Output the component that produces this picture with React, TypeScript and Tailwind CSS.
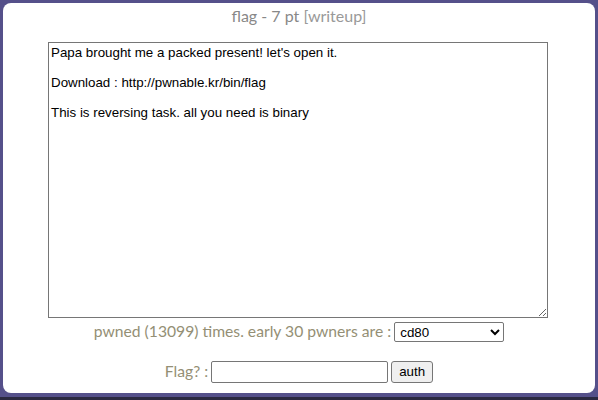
import React from "react";

export default function App() {
  const text =
    "Papa brought me a packed present! let's open it.\n\nDownload : http://pwnable.kr/bin/flag\n\nThis is reversing task. all you need is binary";
  return (
    <div className="w-[598px] h-[400px] bg-[#55508a] overflow-hidden flex flex-col">
      <div className="mx-[3px] mt-[3px] h-[390px] bg-white rounded-[8px] flex flex-col items-center font-['Lato',sans-serif]">
        <div className="mt-[3px] h-[19px] leading-[19px] text-[16px] text-[#888888]">
          flag - 7 pt <span className="text-[#999999]">[writeup]</span>
        </div>
        <textarea
          readOnly
          defaultValue={text}
          className="self-start ml-[45px] mt-[17px] w-[500px] h-[276px] border border-[#767676] p-[2px] text-[13.333px] leading-[15px] text-black font-['Liberation_Sans',Arial,sans-serif] resize-y outline-none"
        />
        <div className="mt-[2px] h-[24px] flex items-center text-[15.7px] text-[#948f75]">
          <span>pwned (13099) times. early 30 pwners are :</span>
          <select className="ml-[3px] w-[110px] h-[20px] border border-[#767676] rounded-[2px] bg-white text-black text-[13.333px] font-['Liberation_Sans',Arial,sans-serif] pl-[1px]">
            <option>cd80</option>
          </select>
        </div>
        <div className="mt-[17px] h-[22px] flex items-center text-[15.7px] text-[#948f75]">
          <span>Flag? :</span>
          <input
            type="text"
            className="ml-[3px] w-[177px] h-[22px] border border-[#767676] rounded-[2px] bg-white text-[13px] px-[2px] outline-none"
          />
          <button className="ml-[3px] w-[42px] h-[22px] bg-[#efefef] border border-[#767676] rounded-[3px] text-black text-[13.333px] font-['Liberation_Sans',Arial,sans-serif]">
            auth
          </button>
        </div>
      </div>
      <div className="h-[4px]" />
      <div className="h-[3px] bg-[#2b2940]" />
    </div>
  );
}
